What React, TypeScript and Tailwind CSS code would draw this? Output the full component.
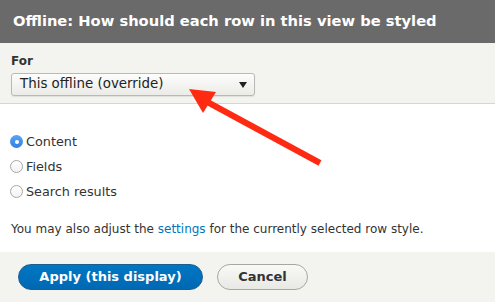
import { useState } from 'react'

const OPTIONS = ['Content', 'Fields', 'Search results']

export default function App() {
  const [style, setStyle] = useState('Content')

  return (
    <div className="w-[495px] h-[302px] flex flex-col bg-white overflow-hidden relative font-['DejaVu_Sans',sans-serif] text-[#333]">
      {/* Title bar */}
      <div className="h-[43px] shrink-0 bg-[#6a6a6a] flex items-center px-[13px]">
        <h1 className="text-[14.7px] font-bold text-white">Offline: How should each row in this view be styled</h1>
      </div>

      {/* For selector */}
      <div className="h-[61px] shrink-0 bg-[#f3f3ef] border-b border-[#d6d6d2] px-[11px] pt-[11px]">
        <label className="block text-[12px] font-bold text-[#333] leading-[14px]">For</label>
        <div className="mt-[5px] w-[244px] h-[23px] rounded-[3px] border border-[#b9b9b5] bg-gradient-to-b from-[#fdfdfc] to-[#ebebe7] flex items-center justify-between pl-[8px] pr-[7px] shadow-[0_1px_1px_rgba(0,0,0,0.08)]">
          <span className="text-[13.4px] text-[#222]">This offline (override)</span>
          <span className="w-0 h-0 border-l-[4px] border-r-[4px] border-t-[6px] border-l-transparent border-r-transparent border-t-[#222]" />
        </div>
      </div>

      {/* Options */}
      <div className="flex-1 px-[10px] pt-[28px]">
        <div className="flex flex-col gap-[6px]">
          {OPTIONS.map(o => (
            <label key={o} className="flex items-center gap-[3px] h-[19px] cursor-pointer" onClick={() => setStyle(o)}>
              {style === o ? (
                <span className="w-[13px] h-[13px] rounded-full bg-gradient-to-b from-[#5aa5f5] to-[#2f7fe6] flex items-center justify-center">
                  <span className="w-[4px] h-[4px] rounded-full bg-white" />
                </span>
              ) : (
                <span className="w-[13px] h-[13px] rounded-full border border-[#a8a8a8] bg-gradient-to-b from-white to-[#f2f2f2]" />
              )}
              <span className="text-[12.8px] text-[#333]">{o}</span>
            </label>
          ))}
        </div>
        <p className="mt-[19px] ml-[1px] text-[12px] text-[#333]">
          You may also adjust the <a className="text-[#0074bd]">settings</a> for the currently selected row style.
        </p>
      </div>

      {/* Footer */}
      <div className="h-[50px] shrink-0 bg-[#f3f3ef] flex items-center gap-[14px] px-[18px]">
        <button className="w-[185px] h-[26px] rounded-full bg-gradient-to-b from-[#0077c4] to-[#0068b3] border border-[#1e5c90] text-white text-[13px] font-bold">Apply (this display)</button>
        <button className="w-[91px] h-[26px] rounded-full bg-gradient-to-b from-[#f9f9f7] to-[#e8e8e4] border border-[#a6a6a2] text-[#333] text-[13px] font-bold">Cancel</button>
      </div>

      {/* Annotation arrow */}
      <svg className="absolute left-0 top-0 pointer-events-none" width="495" height="302">
        <line x1="320" y1="163" x2="200" y2="98" stroke="#ff2a12" strokeWidth="6" />
        <polygon points="189,89 216,92 203,113" fill="#ff2a12" />
      </svg>
    </div>
  )
}
